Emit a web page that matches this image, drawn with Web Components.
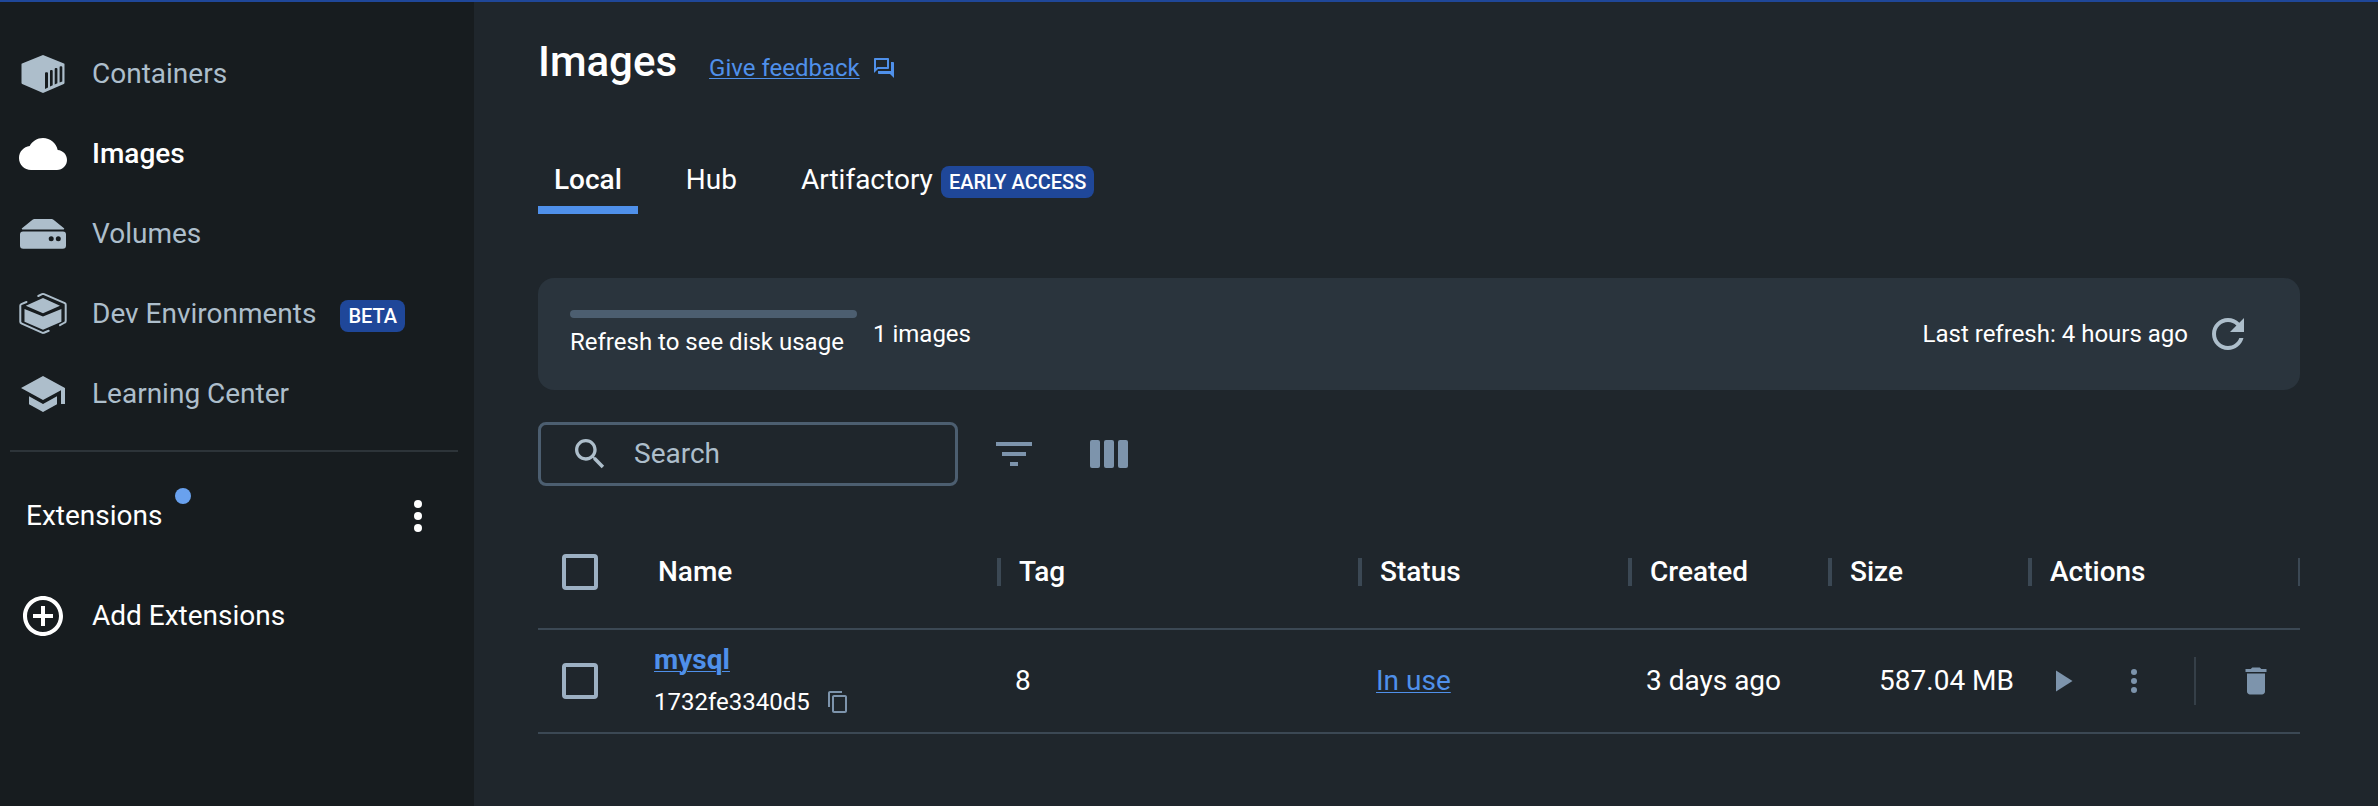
<!DOCTYPE html>
<html lang="en">
<head>
<meta charset="utf-8">
<meta name="viewport" content="width=device-width, initial-scale=1">
<title>Images</title>
<style>
  html, body { margin: 0; min-height: 100vh; }
  body {
    --bg: #1f262c;
    --bg-side: #171c1f;
    --bg-card: #2a343d;
    --line: #3b4854;
    --outline: #4c5e70;
    --muted: #adbecb;
    --control: #7d94ac;
    --link: #4f90ea;
    --badge: #1f4799;
    background: var(--bg);
    color: #fff;
    font: 400 28px/40px Roboto, "Liberation Sans", sans-serif;
    display: flex;
  }
</style>
</head>
<body>
<desktop-app></desktop-app>
<script>
const ICONS = {
  container: ['0 0 48 48', '<path d="M24 5 45 13.5a.8.8 0 0 1 .5.8V33a1.2 1.2 0 0 1-.7 1L24 43 3.2 34a1.2 1.2 0 0 1-.7-1V14.300a.8.8 0 0 1 .5-.8z"/><path fill="var(--bg-side)" d="M26 23.200a1 1 0 0 1 1-1h1a1 1 0 0 1 1 1V37.500L26 39zM31 21a1 1 0 0 1 1-1h.7a1 1 0 0 1 1 1V35.200L31 36.400zM35.700 19a1 1 0 0 1 1-1h.7a1 1 0 0 1 1 1V33.300L35.700 34.500zM40.600 17.200a1 1 0 0 1 1-1h.7a1 1 0 0 1 1 1V31.400L40.600 32.600z"/>'],
  cloud: ['0 0 24 24', '<path d="M19.350 10.040C18.670 6.590 15.640 4 12 4 9.110 4 6.600 5.640 5.350 8.040 2.340 8.360 0 10.910 0 14c0 3.310 2.690 6 6 6h13c2.760 0 5-2.240 5-5 0-2.640-2.050-4.780-4.650-4.960z"/>'],
  volume: ['0 0 48 48', '<path d="M13.500 9.700a3 3 0 0 1 1.900-.7h17.200a3 3 0 0 1 1.900.7L45 18.300a.7.7 0 0 1-.4 1.200H3.400a.7.7 0 0 1-.4-1.200zM4 21.600h40a3 3 0 0 1 3 3V35.500a3.300 3.300 0 0 1-3.300 3.300H4.300A3.300 3.300 0 0 1 1 35.500V24.600a3 3 0 0 1 3-3z"/><g fill="var(--bg-side)"><circle cx="32.200" cy="28.800" r="2.500"/><circle cx="39.300" cy="28.800" r="2.500"/></g>'],
  devenv: ['0 0 48 48', '<path d="M24 8 41 15.700 24 23.200 6.800 15.700zM5.500 19 24 26.500 42.400 19V31.800L24 39.700 5.500 31.800z"/><path fill="none" stroke="currentColor" stroke-width="2" stroke-linecap="round" stroke-linejoin="round" d="M7.500 12 2.300 14.200A1.600 1.600 0 0 0 1.300 15.700V31.800A1.600 1.600 0 0 0 2.300 33.300L23 42.700a2.500 2.500 0 0 0 2 0L29.700 40.800M19.300 6 23 4.200a2.500 2.500 0 0 1 2 0L45.800 13.200A1.600 1.600 0 0 1 46.700 14.700V31a1.600 1.600 0 0 1-.9 1.500L41 35.200"/>'],
  school: ['0 0 24 24', '<path d="M5 13.180v4L12 21l7-3.820v-4L12 17l-7-3.820zM12 3 1 9l11 6 9-4.910V17h2V9L12 3z"/>'],
  add: ['0 0 24 24', '<path d="M13 7h-2v4H7v2h4v4h2v-4h4v-2h-4V7zm-1-5C6.480 2 2 6.480 2 12s4.480 10 10 10 10-4.480 10-10S17.520 2 12 2zm0 18c-4.410 0-8-3.590-8-8s3.590-8 8-8 8 3.590 8 8-3.590 8-8 8z"/>'],
  more: ['0 0 24 24', '<circle cx="12" cy="6" r="2"/><circle cx="12" cy="12" r="2"/><circle cx="12" cy="18" r="2"/>'],
  feedback: ['0 0 24 24', '<path d="M15 4v7H5.170L4 12.170V4h11m1-2H3c-.55 0-1 .45-1 1v14l4-4h10c.55 0 1-.45 1-1V3c0-.55-.45-1-1-1zm5 4h-2v9H6v2c0 .55.45 1 1 1h11l4 4V7c0-.55-.45-1-1-1z"/>'],
  refresh: ['0 0 24 24', '<path d="M17.650 6.350C16.200 4.900 14.210 4 12 4c-4.420 0-7.990 3.580-7.990 8s3.570 8 7.990 8c3.730 0 6.840-2.550 7.730-6h-2.080c-.82 2.330-3.040 4-5.650 4-3.310 0-6-2.690-6-6s2.690-6 6-6c1.660 0 3.140.69 4.220 1.780L13 11h7V4l-2.350 2.350z"/>'],
  search: ['0 0 24 24', '<path d="M15.500 14h-.79l-.28-.27C15.410 12.590 16 11.110 16 9.500 16 5.910 13.090 3 9.500 3S3 5.910 3 9.500 5.910 16 9.500 16c1.610 0 3.090-.59 4.230-1.570l.27.28v.79l5 4.990L20.490 19l-4.990-5zm-6 0C7.010 14 5 11.990 5 9.500S7.010 5 9.500 5 14 7.010 14 9.500 11.990 14 9.500 14z"/>'],
  filter: ['0 0 24 24', '<path d="M10 18h4v-2h-4v2zM3 6v2h18V6H3zm3 7h12v-2H6v2z"/>'],
  columns: ['0 0 48 48', '<rect x="5" y="10" width="10" height="28" rx="2"/><rect x="19" y="10" width="10" height="28" rx="2"/><rect x="33" y="10" width="10" height="28" rx="2"/>'],
  copy: ['0 0 24 24', '<path d="M16 1H4c-1.100 0-2 .9-2 2v14h2V3h12V1zm3 4H8c-1.100 0-2 .9-2 2v14c0 1.100.9 2 2 2h11c1.100 0 2-.9 2-2V7c0-1.100-.9-2-2-2zm0 16H8V7h11v14z"/>'],
  play: ['0 0 24 24', '<path d="M8 5v14l11-7z"/>'],
  trash: ['0 0 24 24', '<path d="M6 19c0 1.100.9 2 2 2h8c1.100 0 2-.9 2-2V7H6v12zM19 4h-3.500l-1-1h-5l-1 1H5v2h14V4z"/>']
};

function define(name, html) {
  const tpl = document.createElement('template');
  tpl.innerHTML = html;
  customElements.define(name, class extends HTMLElement {
    constructor() {
      super();
      this.attachShadow({ mode: 'open' }).append(tpl.content.cloneNode(true));
    }
  });
}

customElements.define('ui-icon', class extends HTMLElement {
  connectedCallback() {
    if (this.shadowRoot) return;
    const [box, art] = ICONS[this.getAttribute('name')];
    this.attachShadow({ mode: 'open' }).innerHTML = `
      <style>
        :host { display: block; flex: none; width: var(--icon, 48px); height: var(--icon, 48px); }
        svg { display: block; width: 100%; height: 100%; fill: currentColor; }
      </style>
      <svg viewBox="${box}" aria-hidden="true">${art}</svg>`;
  }
});

define('ui-badge', `
  <style>
    :host { display: inline-block; padding: 0 8px; border-radius: 8px; background: var(--badge);
      color: #fff; font-size: 20px; font-weight: 500; line-height: 32px; white-space: nowrap; }
  </style>
  <slot></slot>`);

customElements.define('icon-button', class extends HTMLElement {
  connectedCallback() {
    if (this.shadowRoot) return;
    this.attachShadow({ mode: 'open' }).innerHTML = `
      <style>
        :host { display: block; flex: none; }
        button { display: flex; align-items: center; justify-content: center; width: 100%;
          margin: 0; padding: 0; border: 0; background: none; color: inherit; cursor: pointer; }
      </style>
      <button type="button" aria-label="${this.getAttribute('label')}"><ui-icon name="${this.getAttribute('icon')}"></ui-icon></button>`;
  }
});

customElements.define('nav-item', class extends HTMLElement {
  connectedCallback() {
    if (this.shadowRoot) return;
    this.attachShadow({ mode: 'open' }).innerHTML = `
      <style>
        :host { display: block; color: var(--muted); }
        :host([current]) { color: #fff; font-weight: 500; }
        :host([bright]) { color: #fff; }
        a { display: flex; align-items: center; gap: 25px; height: 80px; padding-left: 19px;
          color: inherit; text-decoration: none; white-space: nowrap; }
        .text { display: flex; align-items: baseline; gap: 24px; }
      </style>
      <a href="#"><ui-icon name="${this.getAttribute('icon')}"></ui-icon>
        <span class="text"><slot></slot><slot name="badge"></slot></span></a>`;
  }
});

define('side-bar', `
  <style>
    :host { display: block; flex: none; box-sizing: border-box; width: 474px; padding-top: 32px; background: var(--bg-side); }
    hr { margin: 16px 16px 24px 10px; border: 0; height: 2px; background: #2d3439; }
    .extensions { display: flex; align-items: center; justify-content: space-between;
      height: 80px; margin-bottom: 20px; padding: 0 32px 0 26px; }
    h2 { position: relative; margin: 0; font-size: 28px; font-weight: 400; }
    h2::after { content: ""; position: absolute; left: 100%; top: -8px; margin-left: 13px;
      width: 16px; height: 16px; border-radius: 50%; background: #69a1ee; }
  </style>
  <nav>
    <nav-item icon="container">Containers</nav-item>
    <nav-item icon="cloud" current>Images</nav-item>
    <nav-item icon="volume">Volumes</nav-item>
    <nav-item icon="devenv">Dev Environments<ui-badge slot="badge">BETA</ui-badge></nav-item>
    <nav-item icon="school">Learning Center</nav-item>
  </nav>
  <hr>
  <div class="extensions"><h2>Extensions</h2><icon-button icon="more" label="Extension options"></icon-button></div>
  <nav-item icon="add" bright>Add Extensions</nav-item>`);

define('page-header', `
  <style>
    :host { display: flex; align-items: baseline; gap: 32px; }
    h1 { margin: 0; font-size: 42px; font-weight: 500; line-height: 56px; }
    a { display: flex; align-items: center; gap: 12px; color: var(--link); font-size: 24px; line-height: 32px; --icon: 24px; text-decoration: none; }
    span { text-decoration: underline; text-underline-offset: 2px; text-decoration-thickness: 1px; text-decoration-skip-ink: none; }
  </style>
  <h1>Images</h1>
  <a href="#"><span>Give feedback</span><ui-icon name="feedback"></ui-icon></a>`);

define('image-tabs', `
  <style>
    :host { display: flex; gap: 32px; margin-top: 74px; }
    button { display: flex; align-items: baseline; gap: 8px; margin: 0; padding: 0 16px 8px; border: 0;
      border-bottom: 8px solid transparent; background: none; color: #fff; font: inherit; line-height: 32px; cursor: pointer; }
    [aria-selected="true"] { border-color: var(--link); font-weight: 500; }
  </style>
  <button type="button" role="tab" aria-selected="true">Local</button>
  <button type="button" role="tab" aria-selected="false">Hub</button>
  <button type="button" role="tab" aria-selected="false">Artifactory <ui-badge>EARLY ACCESS</ui-badge></button>`);

define('disk-usage', `
  <style>
    :host { display: flex; align-items: center; gap: 16px; margin-top: 64px; padding: 32px 48px 32px 32px;
      border-radius: 16px; background: var(--bg-card); font-size: 24px; line-height: 32px; white-space: nowrap; }
    .usage { display: grid; gap: 8px; min-width: 287px; }
    progress { display: block; appearance: none; width: 100%; height: 8px; border: 0; border-radius: 4px; overflow: hidden; }
    progress::-webkit-progress-bar { background: var(--outline); }
    progress::-webkit-progress-value { background: var(--link); }
    .last { margin-left: auto; }
    .refresh { height: 48px; margin: -8px 0; color: var(--muted); }
  </style>
  <div class="usage">
    <progress id="disk" value="0" max="1"></progress>
    <label for="disk">Refresh to see disk usage</label>
  </div>
  <span>1 images</span>
  <span class="last">Last refresh: 4 hours ago</span>
  <icon-button class="refresh" icon="refresh" label="Refresh"></icon-button>`);

define('image-toolbar', `
  <style>
    :host { display: flex; align-items: center; margin-top: 32px; color: var(--control); }
    label { display: flex; align-items: center; gap: 24px; box-sizing: border-box; width: 420px; height: 64px;
      padding: 0 29px; border: 3px solid var(--outline); border-radius: 8px; color: var(--muted); --icon: 40px; }
    input { flex: 1; min-width: 0; margin: 0; padding: 0; border: 0; outline: 0; background: none; color: #fff; font: inherit; appearance: none; }
    input::placeholder { color: var(--muted); opacity: 1; }
    .filter { margin: 0 47px 0 32px; }
  </style>
  <label><ui-icon name="search"></ui-icon><input type="search" placeholder="Search" aria-label="Search"></label>
  <icon-button class="filter" icon="filter" label="Filter"></icon-button>
  <icon-button icon="columns" label="Columns"></icon-button>`);

define('image-table', `
  <style>
    :host { display: block; margin-top: 30px; }
    table { width: 100%; table-layout: fixed; border-collapse: separate; border-spacing: 0; white-space: nowrap; }
    col.check { width: 100px; }
    col.wide { width: 270px; }
    col.mid { width: 200px; }
    th, td { box-sizing: border-box; padding: 0 16px; border-bottom: 2px solid var(--line); text-align: left; vertical-align: middle; }
    th { height: 114px; padding: 0; font-weight: 500; }
    td { height: 104px; }
    th span { display: block; padding-left: 18px; border: solid var(--line); border-width: 0 2px; line-height: 28px; }
    th .first { padding-left: 20px; border-left: 0; }
    th.check, td.check { padding: 0 0 0 24px; }
    input { display: block; appearance: none; box-sizing: border-box; width: 36px; height: 36px; margin: 0;
      border: 4px solid #9cb0c3; border-radius: 4px; }
    td.size { text-align: right; }
    td.actions { padding: 0; }
    a { color: var(--link); text-underline-offset: 2px; text-decoration-thickness: 1px; }
    .name { font-weight: 700; line-height: 42px; }
    .id { display: flex; align-items: center; gap: 16px; font-size: 24px; line-height: 42px; }
    .id icon-button { --icon: 24px; color: var(--control); }
    .row-actions { display: flex; align-items: center; gap: 8px; color: var(--control); --icon: 36px; }
    .row-actions icon-button { width: 64px; }
    .row-actions i { width: 2px; height: 48px; margin: 0 20px; background: #353f48; }
  </style>
  <table>
    <colgroup><col class="check"><col><col><col class="wide"><col class="mid"><col class="mid"><col class="wide"></colgroup>
    <thead><tr>
      <th class="check"><input type="checkbox" aria-label="Select all images"></th>
      <th><span class="first">Name</span></th>
      <th><span>Tag</span></th>
      <th><span>Status</span></th>
      <th><span>Created</span></th>
      <th><span>Size</span></th>
      <th><span>Actions</span></th>
    </tr></thead>
    <tbody><tr>
      <td class="check"><input type="checkbox" aria-label="Select mysql"></td>
      <td><div class="name"><a href="#">mysql</a></div>
        <div class="id">1732fe3340d5<icon-button icon="copy" label="Copy image ID"></icon-button></div></td>
      <td>8</td>
      <td><a href="#">In use</a></td>
      <td>3 days ago</td>
      <td class="size">587.04 MB</td>
      <td class="actions"><div class="row-actions">
        <icon-button icon="play" label="Run"></icon-button>
        <icon-button icon="more" label="More actions"></icon-button>
        <i></i>
        <icon-button icon="trash" label="Delete"></icon-button>
      </div></td>
    </tr></tbody>
  </table>`);

define('desktop-app', `
  <style>
    :host { display: flex; flex: 1; min-width: 0; border-top: 2px solid var(--badge); }
    main { flex: 1; min-width: 0; padding: 32px 78px 32px 64px; }
  </style>
  <side-bar></side-bar>
  <main>
    <page-header></page-header>
    <image-tabs role="tablist"></image-tabs>
    <disk-usage></disk-usage>
    <image-toolbar></image-toolbar>
    <image-table></image-table>
  </main>`);
</script>
</body>
</html>
